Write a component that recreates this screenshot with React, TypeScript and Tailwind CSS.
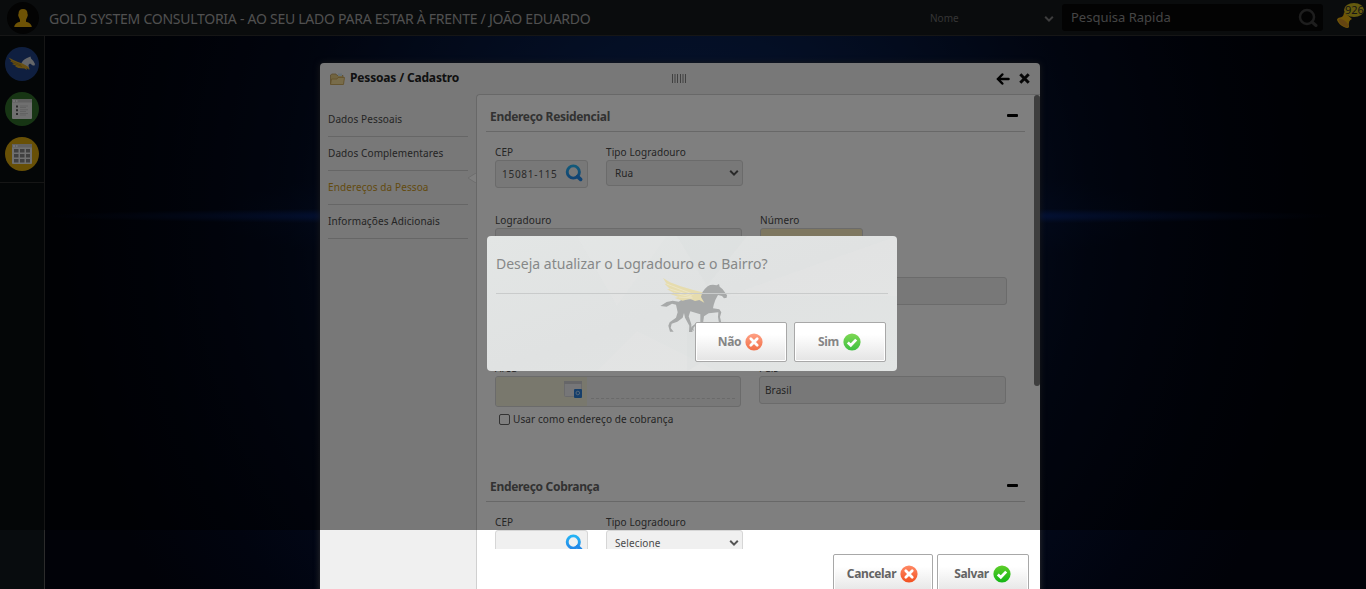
import React from "react";

function Magnifier({ className = "" }: { className?: string }) {
  return (
    <svg viewBox="0 0 18 18" className={className} width="18" height="18">
      <defs>
        <linearGradient id="lens" x1="0" y1="0" x2="0" y2="1">
          <stop offset="0" stopColor="#25b4f5" />
          <stop offset="1" stopColor="#2389e8" />
        </linearGradient>
      </defs>
      <circle cx="8.3" cy="8" r="6.1" fill="none" stroke="url(#lens)" strokeWidth="2.9" />
      <path d="M12.6 12.6 L15.6 15.400" stroke="#2389e8" strokeWidth="3.6" strokeLinecap="round" />
    </svg>
  );
}

function Chevron({ color = "#555" }: { color?: string }) {
  return (
    <svg width="10" height="8" viewBox="0 0 10 8">
      <path d="M1.2 1.8 L5 5.6 L8.8 1.8" fill="none" stroke={color} strokeWidth="2" />
    </svg>
  );
}

function CrossBadge() {
  return (
    <svg width="18" height="18" viewBox="0 0 18 18">
      <defs>
        <linearGradient id="red" x1="0" y1="0" x2="0" y2="1">
          <stop offset="0" stopColor="#ff8a66" />
          <stop offset="1" stopColor="#f2501f" />
        </linearGradient>
      </defs>
      <circle cx="9" cy="9" r="8.6" fill="url(#red)" />
      <path d="M5.8 5.8 L12.2 12.2 M12.2 5.8 L5.8 12.2" stroke="#fff" strokeWidth="2.8" strokeLinecap="round" />
    </svg>
  );
}

function CheckBadge() {
  return (
    <svg width="18" height="18" viewBox="0 0 18 18">
      <defs>
        <linearGradient id="green" x1="0" y1="0" x2="0" y2="1">
          <stop offset="0" stopColor="#5fce2a" />
          <stop offset="1" stopColor="#12b515" />
        </linearGradient>
      </defs>
      <circle cx="9" cy="9" r="8.6" fill="url(#green)" />
      <path d="M4.8 9.4 L7.8 12.2 L13.2 6.6" fill="none" stroke="#fff" strokeWidth="2.8" />
    </svg>
  );
}

function Pegasus() {
  return (
    <svg viewBox="60 50 204 171" width="68" height="57">
      <path
        fill="#a7a9a9"
        d="M61 137 L80 125 L98 121 L116 124 Q125 115 145 117 L178 116 Q186 92 203 78 Q214 71 230 75 L237 71 L239 79 L248 87 L261 105 L260 112 L252 114 L246 107 L234 104 Q226 116 221 134 L219 144 L238 147 L244 156 L240 170 L244 188 L237 188 L234 170 L235 156 L206 159 L192 168 L189 189 L168 193 L160 203 L161 212 L153 208 L155 199 L166 190 L181 185 L181 162 L151 153 L146 168 L154 192 L154 206 L158 215 L147 215 L148 196 L135 172 L132 158 L128 172 L112 184 L95 190 L92 203 L101 214 L90 214 L85 196 L89 186 L108 172 L113 156 L108 133 L96 130 L80 139 Z"
      />
      <path
        fill="#e6dcae"
        d="M69 53 L90 66 L122 78 L160 89 L187 96 L183 110 L193 127 L178 119 L165 122 L150 115 L128 121 L104 113 L116 110 L91 101 L102 98 L81 87 L90 86 L74 70 L80 71 Z"
      />
      <path
        fill="none"
        stroke="#f0ead0"
        strokeWidth="2"
        d="M80 71 L160 102 M90 86 L155 106 M102 98 L155 110 M116 110 L158 113"
      />
    </svg>
  );
}

function Horse() {
  return (
    <svg width="28" height="16" viewBox="0 0 28 16">
      <path
        fill="#c9ccd2"
        d="M13 8.500 Q14 4 19 2 L22.500 0.500 L23 2.500 Q25 4 27 8 L26.500 9.500 L24.800 9.500 L22 7.500 Q20 8.500 20.500 10 L21.500 13 L18 10 Z"
      />
      <path
        fill="#cf9f25"
        d="M0.500 1.500 Q5 4 10 6 Q15 7 18 9.500 L20.500 11 L21.500 14 L18.500 12 L19 14 L16.500 12.500 Q9 12.500 7 10 L8.500 10 L4 8 L6 7.500 L2 5 L3.500 5 Z"
      />
      <path stroke="#8b6a16" strokeWidth="0.500" fill="none" d="M3.500 5 L13 9 M6 7.500 L14 10.500" />
    </svg>
  );
}

function AppWindow({ grid }: { grid?: boolean }) {
  return (
    <svg width="20" height="20" viewBox="0 0 20 20">
      <rect width="20" height="20" rx="1" fill="#e0e0e0" />
      <path d="M0 0 H20 V3.500 H0 Z" fill="#c0c0c0" />
      <path d="M1 1.200 H3 V2.800 H1 Z M4 1.200 H5.500 V2.800 H4 Z" fill="#f4f4f4" />
      {grid ? (
        <path
          fill="#808080"
          d="M2 5h4.500v3.500h-4.500z M8 5h4.500v3.500h-4.500z M14 5h4v3.500h-4z M2 10h4.500v3.500h-4.500z M8 10h4.500v3.500h-4.500z M14 10h4v3.500h-4z M2 15h4.500v3.500h-4.500z M8 15h4.500v3.500h-4.500z M14 15h4v3.500h-4z"
        />
      ) : (
        <>
          <path fill="#555" d="M4 6.500h2v2h-2z M4 10.200h2v2h-2z M4 14h2v2h-2z" />
          <path
            fill="#c4c4c4"
            d="M8 6.500h8v1h-8z M8 8h6v1h-6z M8 10.200h8v1h-8z M8 12h6v1h-6z M8 14h8v1h-8z M8 15.600h6v1h-6z"
          />
        </>
      )}
    </svg>
  );
}

const tiny = "text-[10px] leading-[14px] tracking-[0.1px] text-[#4a4a4a]";
const label = "h-[14px] text-[10px] leading-[12px] tracking-[0.1px] text-[#4a4a4a]";
const box = "box-border flex items-center rounded-[3px] border border-[#d6d6d6] bg-[#f0f0f0]";
const button =
  "box-border flex h-10 items-center justify-center gap-1 rounded-[2px] border border-[#a8a8a8] bg-linear-to-b from-white from-30% to-[#e4e4e4] pr-px shadow-[inset_0_0_0_1px_#ffffff] text-[12px] font-bold tracking-[-0.35px]";

function SectionTitle({ children }: { children: string }) {
  return (
    <div className="box-border flex h-[37px] w-[539px] items-center justify-between border-b border-[#d0d0d0] pl-[4px] pr-[7px] pt-[7px]">
      <h2 className="text-[12px] font-bold tracking-[-0.31px] text-[#646464]">{children}</h2>
      <span className="mb-[2px] block h-[3px] w-[11px] rounded-[1px] bg-black" />
    </div>
  );
}

function FirstRow({ cep, tipo }: { cep: string; tipo: string }) {
  return (
    <div className="flex h-[68px] pl-[9px]">
      <div className="w-[111px]">
        <div className={label}>CEP</div>
        <div className={`${box} h-7 w-[93px] justify-between pl-[6px] pr-[4px]`}>
          <span className="text-[10px] tracking-[0.73px] text-[#555]">{cep}</span>
          <Magnifier className="mb-[2px]" />
        </div>
      </div>
      <div>
        <div className={label}>Tipo Logradouro</div>
        <div className={`${box} h-[26px] w-[137px] justify-between pl-[8px] pr-[3px]`}>
          <span className={tiny}>{tipo}</span>
          <Chevron />
        </div>
      </div>
    </div>
  );
}

function Background() {
  return (
    <svg className="absolute inset-0" width="1366" height="589" viewBox="0 0 1366 589">
      <defs>
        <radialGradient
          id="glow"
          gradientUnits="userSpaceOnUse"
          cx="690"
          cy="215"
          r="640"
          gradientTransform="translate(0 -10) scale(1 1.05)"
        >
          <stop offset="0" stopColor="#0c2a66" />
          <stop offset="0.28" stopColor="#091e4a" />
          <stop offset="0.5" stopColor="#051230" />
          <stop offset="0.63" stopColor="#030a1e" />
          <stop offset="0.85" stopColor="#01040f" />
          <stop offset="1" stopColor="#010208" />
        </radialGradient>
        <radialGradient id="flare">
          <stop offset="0" stopColor="#1650d0" stopOpacity="1" />
          <stop offset="0.55" stopColor="#0a329c" stopOpacity="0.6" />
          <stop offset="1" stopColor="#06205c" stopOpacity="0" />
        </radialGradient>
      </defs>
      <rect width="1366" height="589" fill="#01030a" />
      <rect width="1366" height="589" fill="url(#glow)" />
      <ellipse cx="690" cy="216" rx="650" ry="9" fill="url(#flare)" opacity="0.8" />
      <ellipse cx="690" cy="216" rx="480" ry="60" fill="url(#flare)" opacity="0.3" />
    </svg>
  );
}

function TopBar() {
  return (
    <header className="relative box-border flex h-[36px] shrink-0 items-center border-b border-[#2c2c2c] bg-[#15191b]">
      <div className="ml-[7px] mr-[10px] flex h-8 w-8 shrink-0 items-center justify-center rounded-full bg-[#060606]">
        <svg width="18" height="18" viewBox="0 0 18 18">
          <path
            fill="#dba50b"
            d="M9 0 Q13.500 0 13.500 5 Q14.300 5.500 13.300 8 Q12.500 9.500 12 11 L12 12.800 Q17.500 14 17.800 18 H0.200 Q0.500 14 6 12.800 L6 11 Q5.500 9.500 4.700 8 Q3.700 5.500 4.500 5 Q4.500 0 9 0 Z"
          />
        </svg>
      </div>
      <h1 className="w-[881px] whitespace-nowrap pt-[2px] text-[14px] tracking-[-0.26px] text-[#a0a0a0]">
        GOLD SYSTEM CONSULTORIA - AO SEU LADO PARA ESTAR À FRENTE / JOÃO EDUARDO
      </h1>
      <div className="flex w-[124px] shrink-0 items-center justify-between pt-[2px] text-[10px] text-[#6a6a6a]">
        <span>Nome</span>
        <Chevron color="#7a7a7a" />
      </div>
      <div className="ml-[8px] flex h-[27px] w-[261px] shrink-0 items-center justify-between rounded-[3px] bg-[#060606] pl-[9px] pr-[5px]">
        <span className="text-[13px] text-[#8a8a8a]">Pesquisa Rapida</span>
        <svg width="20" height="20" viewBox="0 0 20 20" fill="none" stroke="#3c3c3c">
          <circle cx="9" cy="9" r="7" strokeWidth="2.500" />
          <path d="M14 14 L18 17.500" strokeWidth="3" strokeLinecap="round" />
        </svg>
      </div>
      <div className="relative ml-[13px] h-[30px] w-[30px] shrink-0">
        <svg className="absolute left-0 top-0" width="30" height="30" viewBox="0 0 30 30">
          <path d="M8 9 L16 16 Q12 17 13 24 Q12 26 8 24 Q3 22 1 17 Q1 15 4 14.500 Q8 14 8 9 Z" fill="#e0aa0c" />
          <ellipse cx="7.500" cy="20" rx="6" ry="2.500" transform="rotate(38 7.500 20)" fill="#c98822" />
          <ellipse cx="18" cy="7" rx="10" ry="7" fill="#c9b41c" />
        </svg>
        <span className="absolute left-[9px] top-0 text-[11px] leading-[13px] text-[#2c2c2c]">926</span>
      </div>
    </header>
  );
}

function PessoasWindow() {
  const nav = ["Dados Pessoais", "Dados Complementares", "Endereços da Pessoa", "Informações Adicionais"];
  return (
    <section className="absolute left-[320px] top-[63px] flex h-[540px] w-[720px] flex-col overflow-hidden rounded-t-[4px] bg-[#f0f0f0] shadow-[0_0_6px_#333333]">
      <div className="flex h-[31px] shrink-0 items-center pl-[10px] pr-[10px]">
        <svg width="15" height="12" viewBox="0 0 15 12">
          <path d="M0.500 11 V2 L2 1 H6 L7 2.500 H13 V11 Z" fill="#e3c880" stroke="#b8985a" strokeWidth="0.800" />
          <path d="M8 0.500 H12 V3 H8 Z" fill="#cfe3ee" />
          <path d="M0.500 11.500 L1.500 6 H7 L8 4.500 H14.500 L13.500 11.500 Z" fill="#f0d894" stroke="#c4a050" strokeWidth="0.800" />
        </svg>
        <h2 className="ml-[5px] w-[322px] pb-px text-[12px] font-bold tracking-[-0.17px] text-[#222]">
          Pessoas / Cadastro
        </h2>
        <svg width="16" height="9" viewBox="0 0 16 9">
          <path d="M0.500 0V9 M3 0V9 M5.500 0V9 M8.500 0V9 M11 0V9 M13.500 0V9" stroke="#808080" />
        </svg>
        <div className="ml-auto flex items-center gap-[9px]">
          <svg width="14" height="12" viewBox="0 0 14 12" fill="none" stroke="#000" strokeWidth="2.500" strokeLinecap="round">
            <path d="M6.300 1.500 L2 6 L6.300 10.500" />
            <path d="M2.500 6 H12.500" />
          </svg>
          <svg width="11" height="11" viewBox="0 0 11 11" stroke="#111" strokeWidth="3">
            <path d="M1.300 1.300 L9.700 9.700 M9.700 1.300 L1.300 9.700" />
          </svg>
        </div>
      </div>
      <div className="flex min-h-0 flex-1">
        <nav className="relative w-[156px] shrink-0 pl-[8px] pr-[8px] pt-[9px]">
          {nav.map((item, i) => (
            <div
              key={item}
              className={`box-border flex h-[34px] items-center border-b border-[#cccccc] pb-[2px] ${tiny}`}
            >
              <span className={i === 2 ? "text-[#c7961c]" : ""}>{item}</span>
            </div>
          ))}
          <svg className="absolute right-0 top-[79px]" width="8" height="10" viewBox="0 0 8 10">
            <path d="M8 0 L0 5 L8 10 Z" fill="#fff" />
            <path d="M8 0 L0 5 L8 10" fill="none" stroke="#dcdcdc" />
          </svg>
        </nav>
        <div className="box-border flex min-w-0 flex-1 flex-col rounded-tl-[4px] border-l border-t border-[#d0d0d0] bg-white">
          <div className="flex h-[454px] shrink-0 justify-between overflow-hidden">
            <div className="pl-[9px]">
              <SectionTitle>Endereço Residencial</SectionTitle>
              <div className="h-[333px] pt-[14px]">
                <FirstRow cep="15081-115" tipo="Rua" />
                <div className="flex h-[49px] pl-[9px]">
                  <div className="w-[265px]">
                    <div className={label}>Logradouro</div>
                    <div className={`${box} h-7 w-[247px]`} />
                  </div>
                  <div>
                    <div className={label}>Número</div>
                    <div className="box-border h-7 w-[103px] rounded-[3px] border border-[#d6d6d6] bg-[#fdefc0]" />
                  </div>
                </div>
                <div className="flex h-[99px] pl-[9px] pt-[14px]">
                  <div className={`${box} mr-[18px] h-7 w-[247px]`} />
                  <div className={`${box} h-7 w-[247px]`} />
                </div>
                <div className="flex h-[50px] pl-[9px]">
                  <div className="w-[264px]">
                    <div className={label}>Área</div>
                    <div className="box-border flex h-[31px] w-[246px] overflow-hidden rounded-[3px] border border-[#d6d6d6] bg-[#f0f0f0]">
                      <div className="flex w-[91px] items-center justify-end bg-[#f3f1da] pb-[4px] pr-[5px]">
                        <svg width="18" height="17" viewBox="0 0 18 17">
                          <rect x="0.500" y="0.500" width="17" height="15" rx="1" fill="#ededf0" stroke="#d4d4d8" />
                          <path d="M0 0 H18 V3 H0 Z" fill="#ccccd0" />
                          <rect x="10" y="8" width="8" height="9" rx="1" fill="#2c7fd6" />
                          <circle cx="13.800" cy="12" r="1.800" fill="none" stroke="#a8ccf4" />
                        </svg>
                      </div>
                      <div className="ml-[4px] mr-[5px] h-[22px] flex-1 border-b border-dashed border-[#d4d4d4]" />
                    </div>
                  </div>
                  <div>
                    <div className={label}>País</div>
                    <div className={`${box} h-7 w-[247px] pl-[5px] ${tiny}`}>Brasil</div>
                  </div>
                </div>
                <div className={`flex items-center pl-[13px] ${tiny}`}>
                  <span className="mr-[3px] box-border block h-[11px] w-[11px] rounded-[2px] border border-[#666] bg-white" />
                  Usar como endereço de cobrança
                </div>
              </div>
              <SectionTitle>Endereço Cobrança</SectionTitle>
              <div className="pt-[14px]">
                <FirstRow cep="" tipo="Selecione" />
              </div>
            </div>
            <div className="h-[291px] w-[6px] rounded-[3px] bg-[#7c7c7c]" />
          </div>
          <div className="flex justify-end gap-1 pr-[11px] pt-[5px]">
            <button className={`${button} w-[100px] text-[#646464]`}>
              <span className="pb-px">Cancelar</span> <CrossBadge />
            </button>
            <button className={`${button} w-[92px] text-[#646464]`}>
              <span className="pb-px">Salvar</span> <CheckBadge />
            </button>
          </div>
        </div>
      </div>
    </section>
  );
}

function ConfirmDialog() {
  return (
    <div className="absolute left-[487px] top-[236px] h-[135px] w-[410px] overflow-hidden rounded-[4px] bg-linear-to-br from-[#e3e6e5] via-[#e0e2e2] to-[#e2e5e4]">
      <svg className="absolute inset-0" width="410" height="135" viewBox="0 0 410 135">
        <path d="M90 0 L180 0 L130 70 Z M150 95 L230 135 L110 135 Z M240 60 L410 0 L410 60 Z" fill="#e9ebeb" opacity="0.2" />
        <path d="M190 0 L260 0 L220 50 Z M200 60 L260 100 L200 135 Z" fill="#d9dcdd" opacity="0.25" />
      </svg>
      <div className="absolute left-[173px] top-[41px]">
        <Pegasus />
      </div>
      <div className="relative flex h-full flex-col px-[9px]">
        <p className="box-border h-[58px] border-b border-[#c9cbcb] pt-[18px] text-[14px] leading-[20px] text-[#868888]">
          Deseja atualizar o Logradouro e o Bairro?
        </p>
        <div className="mt-[28px] flex justify-end gap-[7px] pr-[2px]">
          <button className={`${button} w-[92px] text-[#858585]`}>
            <span className="pb-px">Não</span>
            <span className="opacity-80">
              <CrossBadge />
            </span>
          </button>
          <button className={`${button} w-[92px] text-[#858585]`}>
            <span className="pb-px">Sim</span>
            <span className="opacity-80">
              <CheckBadge />
            </span>
          </button>
        </div>
      </div>
    </div>
  );
}

export default function App() {
  return (
    <div className="relative flex h-[589px] w-[1366px] flex-col overflow-hidden bg-black font-['Noto_Sans',sans-serif]">
      <Background />
      <TopBar />
      <aside className="relative box-border w-[45px] flex-1 border-r border-[#2c2c2c] bg-[#080c0e]">
        <div className="box-border flex h-[147px] flex-col items-center gap-[11px] border-b border-[#2c2c2c] pt-[11px]">
          <div className="flex h-[34px] w-[34px] items-center justify-center rounded-full bg-[#1f3f80]">
            <Horse />
          </div>
          <div className="flex h-[34px] w-[34px] items-center justify-center rounded-full bg-[#2f6a29]">
            <AppWindow />
          </div>
          <div className="flex h-[34px] w-[34px] items-center justify-center rounded-full bg-[#d0a00c]">
            <AppWindow grid />
          </div>
        </div>
      </aside>
      <PessoasWindow />
      <div className="absolute inset-x-0 top-0 h-[530px] bg-black/50" />
      <ConfirmDialog />
    </div>
  );
}
